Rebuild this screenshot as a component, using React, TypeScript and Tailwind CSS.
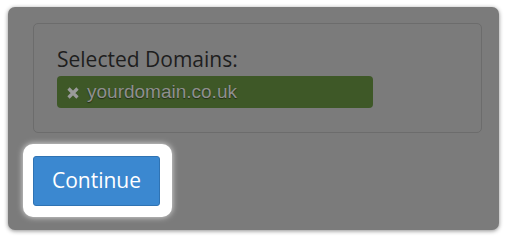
import React from "react";

export default function App() {
  return (
    <div className="w-[507px] h-[240px] bg-white pt-[7px] pl-[8px]" style={{ fontFamily: '"Open Sans", sans-serif' }}>
      <div className="w-[491px] h-[223px] rounded-[7px] bg-[#7b7b7b] pt-[16px] pl-[25px] shadow-[0_1px_4px_rgba(0,0,0,0.45)]">
        <div className="w-[449px] h-[110px] rounded-[5px] border border-[#6c6c6c] pl-[23px] pt-[21px]">
          <div className="text-[21px] leading-[28px] text-[#1e1e1e]">Selected Domains:</div>
          <div className="mt-[3px] w-[316px] h-[32px] rounded-[4px] bg-[#3e5827] flex items-center pl-[10px] gap-[8px]">
            <svg width="12" height="12" viewBox="0 0 12 12" className="mt-[1px] shrink-0">
              <path d="M1.5 1.5 L10.5 10.5 M10.5 1.5 L1.5 10.5" stroke="#9a9a9a" strokeWidth="3.2" strokeLinecap="butt" />
            </svg>
            <span
              className="text-[19px] leading-[22px] text-[#8f8f8f] [text-shadow:0_1px_1px_rgba(0,0,0,0.5)]"
              style={{ fontFamily: '"Liberation Sans", Arial, sans-serif' }}
            >
              yourdomain.co.uk
            </span>
          </div>
        </div>
        <div className="mt-[11px] -ml-[10px] w-[149px] h-[73px] rounded-[10px] bg-white shadow-[0_0_6px_rgba(255,255,255,0.8)] pt-[12px] pl-[10px]">
          <button className="w-[127px] h-[50px] rounded-[3px] bg-[#3b88d0] border border-[#2f73b3] text-white text-[21px] flex items-center justify-center">
            Continue
          </button>
        </div>
      </div>
    </div>
  );
}
